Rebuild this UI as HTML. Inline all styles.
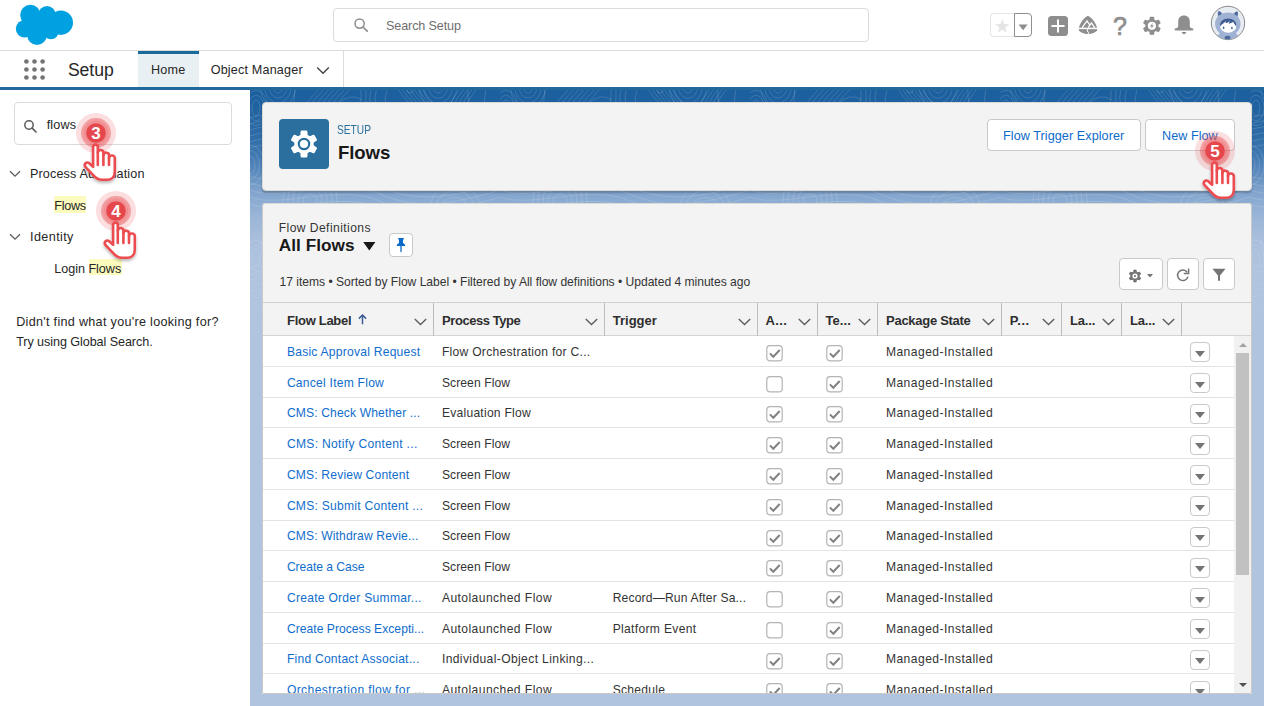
<!DOCTYPE html>
<html lang="en">
<head>
<meta charset="utf-8">
<title>Flows | Salesforce</title>
<style>
*{box-sizing:border-box;margin:0;padding:0}
html,body{width:1264px;height:706px;overflow:hidden;background:#fff}
body{font-family:"Liberation Sans",sans-serif;font-size:13px;color:#181818;position:relative}
.abs{position:absolute}
.t{position:absolute;white-space:nowrap;line-height:1}
/* header */
#hdr{left:0;top:0;width:1264px;height:51px;background:#fff;border-bottom:1px solid #dddbda}
#gsearch{left:333px;top:8px;width:536px;height:34px;border:1px solid #dddbda;border-radius:4px;background:#fff}
/* nav */
#nav{left:0;top:51px;width:1264px;height:39px;background:#fff;border-bottom:3px solid #22699b}
#hometab{left:138px;top:51px;width:61px;height:36px;background:#e9f0f4;border-top:3px solid #1b6a9c}
/* sidebar */
#side{left:0;top:90px;width:250px;height:616px;background:#fff}
#qf{left:14px;top:102px;width:218px;height:43px;border:1px solid #dddbda;border-radius:4px;background:#fff}
.hl{background:#fbfbbd}
/* content */
#content{left:250px;top:90px;width:1014px;height:616px;background:linear-gradient(180deg,#1b5f9e 0px,#1e61a0 12px,#2464a1 25px,#2f6da8 47px,#4179b1 65px,#5a89bd 81px,#6b95c4 90px,#7fa2cc 100px,#8dadd2 113px,#9db7d8 130px,#a8bedc 148px,#adc2de 166px,#b0c4df 200px,#b0c4df 100%)}
.card{background:#f3f3f3;border-radius:4px;box-shadow:0 2px 2px rgba(0,0,0,.22)}
#lvb{left:262px;top:203px;width:990px;height:491px;border:1px solid #cbc9c6;border-top-color:#dcdad7;border-radius:4px 4px 2px 2px}
#ph{left:262px;top:102px;width:990px;height:89px;border:1px solid #dcdad7}
#lv{left:262px;top:203px;width:990px;height:491px;border-radius:4px 4px 0 0;box-shadow:none}
.btn{position:absolute;height:32px;border:1px solid #c9c9c9;border-radius:4px;background:#fff;color:#0b6bcb;font-size:13px;line-height:30px;text-align:center;white-space:nowrap}
#tbl{left:263px;top:302px;width:988px;height:391px;background:#fff;overflow:hidden}
#thead{left:0;top:0;width:988px;height:34px;background:#f3f3f3;border-top:1px solid #d0d0d0;border-bottom:1px solid #d4d4d4}
#tbl i{position:absolute;display:block}
.sep{top:0;width:1px;height:33px;background:#bdbdbd}
.chv,.cbs{position:absolute}
.rl{left:0;width:971px;height:1px;background:#e3e3e3}
.cb{width:16.6px;height:16.4px;border:1px solid #b3b3b3;border-radius:3.5px;background:#fff}
.cb.on::after{content:"";position:absolute;left:5.2px;top:1.6px;width:4.9px;height:9.2px;border:solid #808080;border-width:0 2px 2px 0;transform:rotate(44deg)}
.dd{width:20px;height:20px;border:1px solid #c9c9c9;border-radius:4px;background:#fff}
.dd::after{content:"";position:absolute;left:3.5px;top:7.5px;border:5.5px solid transparent;border-top:6px solid #747474;border-bottom:0}
#sb{left:971px;top:34px;width:17px;height:357px;background:#f1f1f1}
#sb .thumb{position:absolute;left:2px;top:17px;width:13px;height:222px;background:#c1c1c1}
#sb .up{position:absolute;left:5px;top:7px;border:4px solid transparent;border-bottom:4px solid #a3a3a3;border-top:0}
#sb .down{position:absolute;left:5px;top:347px;border:4px solid transparent;border-top:4px solid #505050;border-bottom:0}
</style>
</head>
<body>
<!-- HEADER -->
<div id="hdr" class="abs"></div>
<div id="gsearch" class="abs"></div>
<!-- NAV -->
<div id="nav" class="abs"></div>
<div id="hometab" class="abs"></div>
<div class="abs" style="left:343px;top:51px;width:1px;height:36px;background:#dddbda"></div>
<!-- SIDEBAR -->
<div id="side" class="abs"></div>
<div id="qf" class="abs"></div>
<svg class="abs" style="left:14px;top:3px" width="62" height="44" viewBox="14 3 62 44"><g fill="#00a1e0">
<circle cx="30.4" cy="15" r="10.2"/><circle cx="47" cy="14.6" r="8.6"/><circle cx="60.8" cy="22.7" r="12.2"/>
<circle cx="24.6" cy="28.8" r="8.8"/><circle cx="37" cy="35" r="9.9"/><circle cx="51" cy="31.5" r="7.8"/>
<ellipse cx="42" cy="25" rx="16" ry="11"/></g></svg>
<svg class="abs" style="left:22px;top:57px" width="26" height="26" viewBox="22 57 26 26"><g fill="#747474"><circle cx="26.4" cy="61.5" r="2.3"/><circle cx="34.5" cy="61.5" r="2.3"/><circle cx="42.6" cy="61.5" r="2.3"/><circle cx="26.4" cy="69.5" r="2.3"/><circle cx="34.5" cy="69.5" r="2.3"/><circle cx="42.6" cy="69.5" r="2.3"/><circle cx="26.4" cy="77.5" r="2.3"/><circle cx="34.5" cy="77.5" r="2.3"/><circle cx="42.6" cy="77.5" r="2.3"/></g></svg>
<svg class="abs" style="left:353px;top:17px" width="16" height="16" viewBox="0 0 16 16"><circle cx="6.6" cy="6.6" r="4.6" fill="none" stroke="#8e8e8e" stroke-width="1.5"/><path d="M10 10 L14.2 14.2" stroke="#8e8e8e" stroke-width="1.7" stroke-linecap="round"/></svg>
<svg class="abs" style="left:316px;top:66px" width="14" height="9" viewBox="0 0 14 9"><path d="M1.2 1.4 L7 7.2 L12.8 1.4" fill="none" stroke="#444" stroke-width="1.4"/></svg>
<div class="abs" style="left:990px;top:13px;width:25px;height:24px;border:1px solid #e5e5e5;border-right:0;border-radius:4px 0 0 4px;background:#fff"></div>
<div class="abs" style="left:1014px;top:13px;width:18px;height:24px;border:1px solid #8e8e8e;border-radius:0 4px 4px 0;background:#fff"></div>
<svg class="abs" style="left:990px;top:13px" width="44" height="26" viewBox="990 13 44 26"><polygon points="1002.30,19.00 1004.12,24.09 1009.53,24.25 1005.25,27.56 1006.77,32.75 1002.30,29.70 997.83,32.75 999.35,27.56 995.07,24.25 1000.48,24.09" fill="#e5e5e5"/><path d="M1018.6 24.4 L1027.6 24.4 L1023.1 30.2Z" fill="#8e8e8e"/></svg>
<svg class="abs" style="left:1048px;top:16px" width="20" height="20" viewBox="0 0 20 20"><rect width="20" height="20" rx="3.5" fill="#8e8e8e"/><path d="M10 4.2V15.8M4.2 10H15.8" stroke="#fff" stroke-width="2" stroke-linecap="round"/></svg>
<svg class="abs" style="left:1078px;top:15px" width="20" height="20" viewBox="0 0 20 20">
<path d="M9.9 0.7 C12.8 2 17.6 6.8 19.3 13.2 C19.6 15 18.6 16.4 17 17.3 C13 19.7 7 19.7 3 17.3 C1.4 16.4 0.4 15 0.7 13.2 C2.4 6.8 7 2 9.9 0.7Z" fill="#8e8e8e"/>
<path d="M4.2 12.6 L9 5.9 L11.7 10 M10.2 12.6 L13.4 7.9 L16.7 12.6" stroke="#fff" stroke-width="1.3" fill="none" stroke-linejoin="miter"/>
<path d="M0.3 13.4 H19.7" stroke="#fff" stroke-width="1.5"/>
<path d="M10 13.6 L9 16 L10.7 17.3 L9.8 19.6" stroke="#fff" stroke-width="1" fill="none"/>
</svg>
<div class="t" style="left:1112px;top:11.5px;font-size:25px;font-weight:normal;-webkit-text-stroke:0.7px #8e8e8e;color:#8e8e8e;line-height:28px;width:16px;text-align:center">?</div>
<svg class="abs" style="left:1142px;top:16px" width="20" height="20" viewBox="0 0 20 20"><path d="M8.05 4.09 L8.39 1.43 L11.41 1.43 L11.75 4.09 L13.91 5.34 L16.39 4.31 L17.90 6.92 L15.77 8.55 L15.77 11.05 L17.90 12.68 L16.39 15.29 L13.91 14.26 L11.75 15.51 L11.41 18.17 L8.39 18.17 L8.05 15.51 L5.89 14.26 L3.41 15.29 L1.90 12.68 L4.03 11.05 L4.03 8.55 L1.90 6.92 L3.41 4.31 L5.89 5.34Z" fill="#8e8e8e" stroke="#8e8e8e" stroke-width="1.4" stroke-linejoin="round"/><circle cx="9.9" cy="9.8" r="4.1" fill="#fff"/><path d="M10.9 6.7 L8.0 10.4 H9.8 L8.9 13 L11.8 9.3 H10.0Z" fill="#8e8e8e"/></svg>
<svg class="abs" style="left:1174px;top:15px" width="20" height="20" viewBox="0 0 20 20"><path d="M10 0.6 C6.3 0.6 4.2 3.2 4.2 6.6 V11.2 C4.2 12.6 2.6 13.2 1 13.6 C0.4 13.8 0.4 15.4 1.2 15.4 H18.8 C19.6 15.4 19.6 13.8 19 13.6 C17.4 13.2 15.8 12.6 15.8 11.2 V6.6 C15.8 3.2 13.7 0.6 10 0.6Z" fill="#8e8e8e"/><path d="M7.8 17 H12.2 C12.2 18.4 11.2 19.2 10 19.2 C8.8 19.2 7.8 18.4 7.8 17Z" fill="#8e8e8e"/></svg>
<svg class="abs" style="left:1210px;top:5px" width="36" height="36" viewBox="0 0 36 36">
<defs><clipPath id="avc"><circle cx="18" cy="17.95" r="16.5"/></clipPath></defs>
<circle cx="18" cy="17.95" r="16.7" fill="#e8ecf3" stroke="#7d7d7d" stroke-width="0.9"/>
<g clip-path="url(#avc)">
<path d="M8.2 5.6 C10 6.6 12.4 8 13.6 9.2 L8.4 14 C7.4 11.4 7.4 8 8.2 5.6Z M27.6 5.8 C25.8 6.8 23.6 8 22.4 9.2 L27.4 14 C28.4 11.4 28.4 8.2 27.6 5.8Z" fill="#9fb2d4"/>
<ellipse cx="10" cy="9.4" rx="1.8" ry="3" transform="rotate(-18 10 9.4)" fill="#4f6a9a"/>
<ellipse cx="25.9" cy="9.6" rx="1.8" ry="3" transform="rotate(18 25.9 9.6)" fill="#4f6a9a"/>
<ellipse cx="17.8" cy="19" rx="12.7" ry="11.6" fill="#9fb2d4"/>
<path d="M7 36 C7 29 10 26 17.8 26 C25.6 26 28.8 29 28.8 36Z" fill="#9fb2d4"/>
<ellipse cx="18.2" cy="21.2" rx="8.1" ry="6.6" fill="#fff"/>
<path d="M10.1 21.4 C9.6 16.4 13.2 13.5 18.2 13.5 C23.2 13.5 26.8 16.4 26.3 21.4 C25 19.8 23.8 18.4 23.2 16.8 C22 18 20.4 18.6 18.6 18.6 C19.2 17.8 19.6 17 19.6 16 C18.2 17.6 16.6 18.2 15.4 18 C15.8 17.4 16 16.8 16 16.2 C14 18 11.6 19.4 10.1 21.4Z" fill="#3f5f92"/>
<ellipse cx="13.6" cy="22.8" rx="0.8" ry="1.2" fill="#3f5f92"/><ellipse cx="21.9" cy="23" rx="0.8" ry="1.2" fill="#3f5f92"/>
<ellipse cx="17.6" cy="32.7" rx="2.9" ry="1.9" fill="#4f6a9a"/>
</g></svg>
<svg class="abs" style="left:23px;top:118.7px" width="15" height="15" viewBox="0 0 15 15"><circle cx="6" cy="6" r="4.2" fill="none" stroke="#5c5c5c" stroke-width="1.5"/><path d="M9.2 9.2 L13 13" stroke="#5c5c5c" stroke-width="1.7" stroke-linecap="round"/></svg>
<svg class="abs" style="left:9px;top:170px" width="12" height="8" viewBox="0 0 12 8"><path d="M1 1.2 L6 6.2 L11 1.2" fill="none" stroke="#5c5c5c" stroke-width="1.3"/></svg>
<svg class="abs" style="left:9px;top:233px" width="12" height="8" viewBox="0 0 12 8"><path d="M1 1.2 L6 6.2 L11 1.2" fill="none" stroke="#5c5c5c" stroke-width="1.3"/></svg>
<!-- CONTENT -->
<div id="content" class="abs"></div>
<svg class="abs" style="left:250px;top:90px" width="1014" height="616" viewBox="0 0 1014 616">
<defs><linearGradient id="tfade" x1="0" y1="0" x2="0" y2="1"><stop offset="0" stop-color="#fff"/><stop offset="0.55" stop-color="#fff"/><stop offset="1" stop-color="#000"/></linearGradient><mask id="tmask"><rect width="1014" height="260" fill="url(#tfade)"/></mask><pattern id="topo" width="250" height="150" patternUnits="userSpaceOnUse"><g fill="none" stroke="#fff" stroke-opacity="0.2" stroke-width="0.7"><ellipse cx="28" cy="-4" rx="5.0" ry="7.0"/><ellipse cx="28" cy="-4" rx="9.2" ry="12.0"/><ellipse cx="28" cy="-4" rx="13.4" ry="17.1"/><ellipse cx="28" cy="-4" rx="17.6" ry="22.1"/><ellipse cx="188" cy="-6" rx="6.0" ry="9.0"/><ellipse cx="188" cy="-6" rx="10.4" ry="14.3"/><ellipse cx="188" cy="-6" rx="14.8" ry="19.6"/><ellipse cx="188" cy="-6" rx="19.2" ry="24.8"/><ellipse cx="6" cy="18" rx="4.0" ry="8.0"/><ellipse cx="6" cy="18" rx="8.0" ry="12.8"/><ellipse cx="6" cy="18" rx="12.0" ry="17.6"/><ellipse cx="125" cy="60" rx="8.0" ry="5.0"/><ellipse cx="125" cy="60" rx="13.0" ry="11.0"/><ellipse cx="125" cy="60" rx="18.0" ry="17.0"/><ellipse cx="125" cy="60" rx="23.0" ry="23.0"/><ellipse cx="125" cy="60" rx="28.0" ry="29.0"/><ellipse cx="60" cy="110" rx="7.0" ry="6.0"/><ellipse cx="60" cy="110" rx="12.0" ry="12.0"/><ellipse cx="60" cy="110" rx="17.0" ry="18.0"/><ellipse cx="60" cy="110" rx="22.0" ry="24.0"/><ellipse cx="60" cy="110" rx="27.0" ry="30.0"/><ellipse cx="205" cy="120" rx="9.0" ry="6.0"/><ellipse cx="205" cy="120" rx="14.5" ry="12.6"/><ellipse cx="205" cy="120" rx="20.0" ry="19.2"/><ellipse cx="205" cy="120" rx="25.5" ry="25.8"/><ellipse cx="0" cy="75" rx="5.0" ry="9.0"/><ellipse cx="0" cy="75" rx="9.5" ry="14.4"/><ellipse cx="0" cy="75" rx="14.0" ry="19.8"/><ellipse cx="250" cy="75" rx="5.0" ry="9.0"/><ellipse cx="250" cy="75" rx="9.5" ry="14.4"/><ellipse cx="250" cy="75" rx="14.0" ry="19.8"/><ellipse cx="160" cy="150" rx="8.0" ry="6.0"/><ellipse cx="160" cy="150" rx="13.0" ry="12.0"/><ellipse cx="160" cy="150" rx="18.0" ry="18.0"/><ellipse cx="160" cy="150" rx="23.0" ry="24.0"/><ellipse cx="160" cy="0" rx="3.0" ry="3.0"/><path d="M56.0 14 Q62.0 6 69.0 -1"/><path d="M61.2 14 Q67.2 6 74.2 -1"/><path d="M66.4 14 Q72.4 6 79.4 -1"/><path d="M71.6 14 Q77.6 6 84.6 -1"/><path d="M76.8 14 Q82.8 6 89.8 -1"/><path d="M82.0 14 Q88.0 6 95.0 -1"/><path d="M87.2 14 Q93.2 6 100.2 -1"/><path d="M200.0 14 Q204.0 6 210.0 -1"/><path d="M204.2 14 Q208.2 6 214.2 -1"/><path d="M208.4 14 Q212.4 6 218.4 -1"/><path d="M212.6 14 Q216.6 6 222.6 -1"/><path d="M216.8 14 Q220.8 6 226.8 -1"/><path d="M148.0 -1 Q153.0 7 160.0 14"/><path d="M152.0 -1 Q157.0 7 164.0 14"/><path d="M156.0 -1 Q161.0 7 168.0 14"/><path d="M160.0 -1 Q165.0 7 172.0 14"/><path d="M164.0 -1 Q169.0 7 176.0 14"/><path d="M168.0 -1 Q173.0 7 180.0 14"/><path d="M172.0 -1 Q177.0 7 184.0 14"/><path d="M45 -1 Q43.9 8 43.6 16"/><path d="M111 -1 Q111.9 8 109.3 16"/><path d="M116 -1 Q116.2 8 115.5 16"/><path d="M121 -1 Q118.3 8 121.0 16"/><path d="M126.5 -1 Q123.7 8 126.2 16"/><path d="M137 -1 Q134.4 8 135.4 16"/><path d="M218 -1 Q217.5 8 219.3 16"/><path d="M236 -1 Q233.7 8 234.9 16"/><path d="M88 14 Q100 2 112 10"/><path d="M0 28 C40 14 70 44 110 30 S190 16 250 28"/><path d="M0 34 C40 20 70 50 110 36 S190 22 250 34"/><path d="M0 40 C40 26 70 56 110 42 S190 28 250 40"/><path d="M0 46 C40 32 70 62 110 48 S190 34 250 46"/><path d="M0 52 C40 38 70 68 110 54 S190 40 250 52"/><path d="M0 58 C40 44 70 74 110 60 S190 46 250 58"/><path d="M0 86 C30 98 90 72 130 90 S210 98 250 86"/><path d="M0 93 C30 105 90 79 130 97 S210 105 250 93"/><path d="M0 100 C30 112 90 86 130 104 S210 112 250 100"/><path d="M0 107 C30 119 90 93 130 111 S210 119 250 107"/><path d="M0 114 C30 126 90 100 130 118 S210 126 250 114"/></g></pattern></defs>
<rect width="1014" height="260" fill="url(#topo)" mask="url(#tmask)"/></svg>
<div id="ph" class="abs card"></div>
<div class="abs" style="left:279px;top:119px;width:50px;height:50px;border-radius:4px;background:#2a6f9e"></div>
<div id="lv" class="abs card"></div>
<div id="tbl" class="abs">
 <div id="thead" class="abs">
<i class="sep" style="left:170px"></i>
<svg class="chv" style="left:150.7px;top:15.4px" viewBox="0 0 13 8" width="13" height="8"><path d="M0.8 1 L6.5 6.6 L12.2 1" fill="none" stroke="#5c5c5c" stroke-width="1.35"/></svg>
<i class="sep" style="left:341px"></i>
<svg class="chv" style="left:321.7px;top:15.4px" viewBox="0 0 13 8" width="13" height="8"><path d="M0.8 1 L6.5 6.6 L12.2 1" fill="none" stroke="#5c5c5c" stroke-width="1.35"/></svg>
<i class="sep" style="left:494px"></i>
<svg class="chv" style="left:474.7px;top:15.4px" viewBox="0 0 13 8" width="13" height="8"><path d="M0.8 1 L6.5 6.6 L12.2 1" fill="none" stroke="#5c5c5c" stroke-width="1.35"/></svg>
<i class="sep" style="left:554px"></i>
<svg class="chv" style="left:534.7px;top:15.4px" viewBox="0 0 13 8" width="13" height="8"><path d="M0.8 1 L6.5 6.6 L12.2 1" fill="none" stroke="#5c5c5c" stroke-width="1.35"/></svg>
<i class="sep" style="left:614px"></i>
<svg class="chv" style="left:594.7px;top:15.4px" viewBox="0 0 13 8" width="13" height="8"><path d="M0.8 1 L6.5 6.6 L12.2 1" fill="none" stroke="#5c5c5c" stroke-width="1.35"/></svg>
<i class="sep" style="left:738px"></i>
<svg class="chv" style="left:718.7px;top:15.4px" viewBox="0 0 13 8" width="13" height="8"><path d="M0.8 1 L6.5 6.6 L12.2 1" fill="none" stroke="#5c5c5c" stroke-width="1.35"/></svg>
<i class="sep" style="left:798px"></i>
<svg class="chv" style="left:778.7px;top:15.4px" viewBox="0 0 13 8" width="13" height="8"><path d="M0.8 1 L6.5 6.6 L12.2 1" fill="none" stroke="#5c5c5c" stroke-width="1.35"/></svg>
<i class="sep" style="left:858px"></i>
<svg class="chv" style="left:838.7px;top:15.4px" viewBox="0 0 13 8" width="13" height="8"><path d="M0.8 1 L6.5 6.6 L12.2 1" fill="none" stroke="#5c5c5c" stroke-width="1.35"/></svg>
<i class="sep" style="left:918px"></i>
<svg class="chv" style="left:898.7px;top:15.4px" viewBox="0 0 13 8" width="13" height="8"><path d="M0.8 1 L6.5 6.6 L12.2 1" fill="none" stroke="#5c5c5c" stroke-width="1.35"/></svg>
<svg class="abs" style="left:94.6px;top:11px" width="9" height="11" viewBox="0 0 9 11"><path d="M4.5 10.2 V1.4 M0.9 4.6 L4.5 1 L8.1 4.6" fill="none" stroke="#3c5a94" stroke-width="1.5"/></svg>
 </div>
<i class="rl" style="top:64px"></i>
<svg class="cbs" style="left:503px;top:42.95px" width="18" height="18" viewBox="0 0 18 18"><rect x="0.8" y="0.7" width="15.4" height="15.2" rx="3.2" fill="#fff" stroke="#b4b4b4" stroke-width="1.2"/><path d="M3.9 8.4 L7.3 11.8 L13.7 5" fill="none" stroke="#828282" stroke-width="2"/></svg>
<svg class="cbs" style="left:563px;top:42.95px" width="18" height="18" viewBox="0 0 18 18"><rect x="0.8" y="0.7" width="15.4" height="15.2" rx="3.2" fill="#fff" stroke="#b4b4b4" stroke-width="1.2"/><path d="M3.9 8.4 L7.3 11.8 L13.7 5" fill="none" stroke="#828282" stroke-width="2"/></svg>
<i class="dd" style="left:927px;top:40.25px"></i>
<i class="rl" style="top:95px"></i>
<svg class="cbs" style="left:503px;top:73.71px" width="18" height="18" viewBox="0 0 18 18"><rect x="0.8" y="0.7" width="15.4" height="15.2" rx="3.2" fill="#fff" stroke="#b4b4b4" stroke-width="1.2"/></svg>
<svg class="cbs" style="left:563px;top:73.71px" width="18" height="18" viewBox="0 0 18 18"><rect x="0.8" y="0.7" width="15.4" height="15.2" rx="3.2" fill="#fff" stroke="#b4b4b4" stroke-width="1.2"/><path d="M3.9 8.4 L7.3 11.8 L13.7 5" fill="none" stroke="#828282" stroke-width="2"/></svg>
<i class="dd" style="left:927px;top:71.01px"></i>
<i class="rl" style="top:125px"></i>
<svg class="cbs" style="left:503px;top:104.47px" width="18" height="18" viewBox="0 0 18 18"><rect x="0.8" y="0.7" width="15.4" height="15.2" rx="3.2" fill="#fff" stroke="#b4b4b4" stroke-width="1.2"/><path d="M3.9 8.4 L7.3 11.8 L13.7 5" fill="none" stroke="#828282" stroke-width="2"/></svg>
<svg class="cbs" style="left:563px;top:104.47px" width="18" height="18" viewBox="0 0 18 18"><rect x="0.8" y="0.7" width="15.4" height="15.2" rx="3.2" fill="#fff" stroke="#b4b4b4" stroke-width="1.2"/><path d="M3.9 8.4 L7.3 11.8 L13.7 5" fill="none" stroke="#828282" stroke-width="2"/></svg>
<i class="dd" style="left:927px;top:101.77px"></i>
<i class="rl" style="top:156px"></i>
<svg class="cbs" style="left:503px;top:135.23px" width="18" height="18" viewBox="0 0 18 18"><rect x="0.8" y="0.7" width="15.4" height="15.2" rx="3.2" fill="#fff" stroke="#b4b4b4" stroke-width="1.2"/><path d="M3.9 8.4 L7.3 11.8 L13.7 5" fill="none" stroke="#828282" stroke-width="2"/></svg>
<svg class="cbs" style="left:563px;top:135.23px" width="18" height="18" viewBox="0 0 18 18"><rect x="0.8" y="0.7" width="15.4" height="15.2" rx="3.2" fill="#fff" stroke="#b4b4b4" stroke-width="1.2"/><path d="M3.9 8.4 L7.3 11.8 L13.7 5" fill="none" stroke="#828282" stroke-width="2"/></svg>
<i class="dd" style="left:927px;top:132.53px"></i>
<i class="rl" style="top:187px"></i>
<svg class="cbs" style="left:503px;top:165.99px" width="18" height="18" viewBox="0 0 18 18"><rect x="0.8" y="0.7" width="15.4" height="15.2" rx="3.2" fill="#fff" stroke="#b4b4b4" stroke-width="1.2"/><path d="M3.9 8.4 L7.3 11.8 L13.7 5" fill="none" stroke="#828282" stroke-width="2"/></svg>
<svg class="cbs" style="left:563px;top:165.99px" width="18" height="18" viewBox="0 0 18 18"><rect x="0.8" y="0.7" width="15.4" height="15.2" rx="3.2" fill="#fff" stroke="#b4b4b4" stroke-width="1.2"/><path d="M3.9 8.4 L7.3 11.8 L13.7 5" fill="none" stroke="#828282" stroke-width="2"/></svg>
<i class="dd" style="left:927px;top:163.29px"></i>
<i class="rl" style="top:218px"></i>
<svg class="cbs" style="left:503px;top:196.75px" width="18" height="18" viewBox="0 0 18 18"><rect x="0.8" y="0.7" width="15.4" height="15.2" rx="3.2" fill="#fff" stroke="#b4b4b4" stroke-width="1.2"/><path d="M3.9 8.4 L7.3 11.8 L13.7 5" fill="none" stroke="#828282" stroke-width="2"/></svg>
<svg class="cbs" style="left:563px;top:196.75px" width="18" height="18" viewBox="0 0 18 18"><rect x="0.8" y="0.7" width="15.4" height="15.2" rx="3.2" fill="#fff" stroke="#b4b4b4" stroke-width="1.2"/><path d="M3.9 8.4 L7.3 11.8 L13.7 5" fill="none" stroke="#828282" stroke-width="2"/></svg>
<i class="dd" style="left:927px;top:194.05px"></i>
<i class="rl" style="top:248px"></i>
<svg class="cbs" style="left:503px;top:227.51px" width="18" height="18" viewBox="0 0 18 18"><rect x="0.8" y="0.7" width="15.4" height="15.2" rx="3.2" fill="#fff" stroke="#b4b4b4" stroke-width="1.2"/><path d="M3.9 8.4 L7.3 11.8 L13.7 5" fill="none" stroke="#828282" stroke-width="2"/></svg>
<svg class="cbs" style="left:563px;top:227.51px" width="18" height="18" viewBox="0 0 18 18"><rect x="0.8" y="0.7" width="15.4" height="15.2" rx="3.2" fill="#fff" stroke="#b4b4b4" stroke-width="1.2"/><path d="M3.9 8.4 L7.3 11.8 L13.7 5" fill="none" stroke="#828282" stroke-width="2"/></svg>
<i class="dd" style="left:927px;top:224.81px"></i>
<i class="rl" style="top:279px"></i>
<svg class="cbs" style="left:503px;top:258.27px" width="18" height="18" viewBox="0 0 18 18"><rect x="0.8" y="0.7" width="15.4" height="15.2" rx="3.2" fill="#fff" stroke="#b4b4b4" stroke-width="1.2"/><path d="M3.9 8.4 L7.3 11.8 L13.7 5" fill="none" stroke="#828282" stroke-width="2"/></svg>
<svg class="cbs" style="left:563px;top:258.27px" width="18" height="18" viewBox="0 0 18 18"><rect x="0.8" y="0.7" width="15.4" height="15.2" rx="3.2" fill="#fff" stroke="#b4b4b4" stroke-width="1.2"/><path d="M3.9 8.4 L7.3 11.8 L13.7 5" fill="none" stroke="#828282" stroke-width="2"/></svg>
<i class="dd" style="left:927px;top:255.57px"></i>
<i class="rl" style="top:310px"></i>
<svg class="cbs" style="left:503px;top:289.03px" width="18" height="18" viewBox="0 0 18 18"><rect x="0.8" y="0.7" width="15.4" height="15.2" rx="3.2" fill="#fff" stroke="#b4b4b4" stroke-width="1.2"/></svg>
<svg class="cbs" style="left:563px;top:289.03px" width="18" height="18" viewBox="0 0 18 18"><rect x="0.8" y="0.7" width="15.4" height="15.2" rx="3.2" fill="#fff" stroke="#b4b4b4" stroke-width="1.2"/><path d="M3.9 8.4 L7.3 11.8 L13.7 5" fill="none" stroke="#828282" stroke-width="2"/></svg>
<i class="dd" style="left:927px;top:286.33px"></i>
<i class="rl" style="top:341px"></i>
<svg class="cbs" style="left:503px;top:319.79px" width="18" height="18" viewBox="0 0 18 18"><rect x="0.8" y="0.7" width="15.4" height="15.2" rx="3.2" fill="#fff" stroke="#b4b4b4" stroke-width="1.2"/></svg>
<svg class="cbs" style="left:563px;top:319.79px" width="18" height="18" viewBox="0 0 18 18"><rect x="0.8" y="0.7" width="15.4" height="15.2" rx="3.2" fill="#fff" stroke="#b4b4b4" stroke-width="1.2"/><path d="M3.9 8.4 L7.3 11.8 L13.7 5" fill="none" stroke="#828282" stroke-width="2"/></svg>
<i class="dd" style="left:927px;top:317.09px"></i>
<i class="rl" style="top:371px"></i>
<svg class="cbs" style="left:503px;top:350.55px" width="18" height="18" viewBox="0 0 18 18"><rect x="0.8" y="0.7" width="15.4" height="15.2" rx="3.2" fill="#fff" stroke="#b4b4b4" stroke-width="1.2"/><path d="M3.9 8.4 L7.3 11.8 L13.7 5" fill="none" stroke="#828282" stroke-width="2"/></svg>
<svg class="cbs" style="left:563px;top:350.55px" width="18" height="18" viewBox="0 0 18 18"><rect x="0.8" y="0.7" width="15.4" height="15.2" rx="3.2" fill="#fff" stroke="#b4b4b4" stroke-width="1.2"/><path d="M3.9 8.4 L7.3 11.8 L13.7 5" fill="none" stroke="#828282" stroke-width="2"/></svg>
<i class="dd" style="left:927px;top:347.85px"></i>
<i class="rl" style="top:402px"></i>
<svg class="cbs" style="left:503px;top:381.31px" width="18" height="18" viewBox="0 0 18 18"><rect x="0.8" y="0.7" width="15.4" height="15.2" rx="3.2" fill="#fff" stroke="#b4b4b4" stroke-width="1.2"/><path d="M3.9 8.4 L7.3 11.8 L13.7 5" fill="none" stroke="#828282" stroke-width="2"/></svg>
<svg class="cbs" style="left:563px;top:381.31px" width="18" height="18" viewBox="0 0 18 18"><rect x="0.8" y="0.7" width="15.4" height="15.2" rx="3.2" fill="#fff" stroke="#b4b4b4" stroke-width="1.2"/><path d="M3.9 8.4 L7.3 11.8 L13.7 5" fill="none" stroke="#828282" stroke-width="2"/></svg>
<i class="dd" style="left:927px;top:378.61px"></i>
<div class="t" style="left:23.9px;top:44px;font-size:12.1px;letter-spacing:0.232px;color:#106dcc">Basic Approval Request</div>
<div class="t" style="left:178.9px;top:44px;font-size:12.1px;letter-spacing:0.273px;color:#333333">Flow Orchestration for C...</div>
<div class="t" style="left:622.9px;top:44px;font-size:12.1px;letter-spacing:0.452px;color:#333333">Managed-Installed</div>
<div class="t" style="left:23.9px;top:75px;font-size:12.1px;letter-spacing:0.236px;color:#106dcc">Cancel Item Flow</div>
<div class="t" style="left:178.9px;top:75px;font-size:12.1px;letter-spacing:0.089px;color:#333333">Screen Flow</div>
<div class="t" style="left:622.9px;top:75px;font-size:12.1px;letter-spacing:0.452px;color:#333333">Managed-Installed</div>
<div class="t" style="left:23.9px;top:105px;font-size:12.1px;letter-spacing:0.141px;color:#106dcc">CMS: Check Whether ...</div>
<div class="t" style="left:178.9px;top:105px;font-size:12.1px;letter-spacing:0.248px;color:#333333">Evaluation Flow</div>
<div class="t" style="left:622.9px;top:105px;font-size:12.1px;letter-spacing:0.452px;color:#333333">Managed-Installed</div>
<div class="t" style="left:23.9px;top:136px;font-size:12.1px;letter-spacing:0.306px;color:#106dcc">CMS: Notify Content ...</div>
<div class="t" style="left:178.9px;top:136px;font-size:12.1px;letter-spacing:0.089px;color:#333333">Screen Flow</div>
<div class="t" style="left:622.9px;top:136px;font-size:12.1px;letter-spacing:0.452px;color:#333333">Managed-Installed</div>
<div class="t" style="left:23.9px;top:167px;font-size:12.1px;letter-spacing:0.175px;color:#106dcc">CMS: Review Content</div>
<div class="t" style="left:178.9px;top:167px;font-size:12.1px;letter-spacing:0.089px;color:#333333">Screen Flow</div>
<div class="t" style="left:622.9px;top:167px;font-size:12.1px;letter-spacing:0.452px;color:#333333">Managed-Installed</div>
<div class="t" style="left:23.9px;top:198px;font-size:12.1px;letter-spacing:0.248px;color:#106dcc">CMS: Submit Content ...</div>
<div class="t" style="left:178.9px;top:198px;font-size:12.1px;letter-spacing:0.089px;color:#333333">Screen Flow</div>
<div class="t" style="left:622.9px;top:198px;font-size:12.1px;letter-spacing:0.452px;color:#333333">Managed-Installed</div>
<div class="t" style="left:23.9px;top:228px;font-size:12.1px;letter-spacing:0.147px;color:#106dcc">CMS: Withdraw Revie...</div>
<div class="t" style="left:178.9px;top:228px;font-size:12.1px;letter-spacing:0.089px;color:#333333">Screen Flow</div>
<div class="t" style="left:622.9px;top:228px;font-size:12.1px;letter-spacing:0.452px;color:#333333">Managed-Installed</div>
<div class="t" style="left:23.9px;top:259px;font-size:12.1px;letter-spacing:-0.030px;color:#106dcc">Create a Case</div>
<div class="t" style="left:178.9px;top:259px;font-size:12.1px;letter-spacing:0.089px;color:#333333">Screen Flow</div>
<div class="t" style="left:622.9px;top:259px;font-size:12.1px;letter-spacing:0.452px;color:#333333">Managed-Installed</div>
<div class="t" style="left:23.9px;top:290px;font-size:12.1px;letter-spacing:0.262px;color:#106dcc">Create Order Summar...</div>
<div class="t" style="left:178.9px;top:290px;font-size:12.1px;letter-spacing:0.431px;color:#333333">Autolaunched Flow</div>
<div class="t" style="left:349.7px;top:290px;font-size:12.1px;letter-spacing:0.171px;color:#333333">Record—Run After Sa...</div>
<div class="t" style="left:622.9px;top:290px;font-size:12.1px;letter-spacing:0.452px;color:#333333">Managed-Installed</div>
<div class="t" style="left:23.9px;top:321px;font-size:12.1px;letter-spacing:0.034px;color:#106dcc">Create Process Excepti...</div>
<div class="t" style="left:178.9px;top:321px;font-size:12.1px;letter-spacing:0.431px;color:#333333">Autolaunched Flow</div>
<div class="t" style="left:349.7px;top:321px;font-size:12.1px;letter-spacing:0.313px;color:#333333">Platform Event</div>
<div class="t" style="left:622.9px;top:321px;font-size:12.1px;letter-spacing:0.452px;color:#333333">Managed-Installed</div>
<div class="t" style="left:23.9px;top:351px;font-size:12.1px;letter-spacing:0.231px;color:#106dcc">Find Contact Associat...</div>
<div class="t" style="left:178.9px;top:351px;font-size:12.1px;letter-spacing:0.377px;color:#333333">Individual-Object Linking...</div>
<div class="t" style="left:622.9px;top:351px;font-size:12.1px;letter-spacing:0.452px;color:#333333">Managed-Installed</div>
<div class="t" style="left:23.9px;top:382px;font-size:12.1px;letter-spacing:0.386px;color:#106dcc">Orchestration flow for ...</div>
<div class="t" style="left:178.9px;top:382px;font-size:12.1px;letter-spacing:0.431px;color:#333333">Autolaunched Flow</div>
<div class="t" style="left:349.7px;top:382px;font-size:12.1px;letter-spacing:0.258px;color:#333333">Schedule</div>
<div class="t" style="left:622.9px;top:382px;font-size:12.1px;letter-spacing:0.452px;color:#333333">Managed-Installed</div>
<div class="t" style="left:24.1px;top:12px;font-size:13px;letter-spacing:-0.307px;color:#2e2e2e;font-weight:bold">Flow Label</div>
<div class="t" style="left:179.1px;top:12px;font-size:13px;letter-spacing:-0.441px;color:#2e2e2e;font-weight:bold">Process Type</div>
<div class="t" style="left:349.7px;top:12px;font-size:13px;letter-spacing:0.017px;color:#2e2e2e;font-weight:bold">Trigger</div>
<div class="t" style="left:502.6px;top:12px;font-size:13px;letter-spacing:0.341px;color:#2e2e2e;font-weight:bold">A...</div>
<div class="t" style="left:562.4px;top:12px;font-size:13px;letter-spacing:0.111px;color:#2e2e2e;font-weight:bold">Te...</div>
<div class="t" style="left:623.1px;top:12px;font-size:13px;letter-spacing:-0.290px;color:#2e2e2e;font-weight:bold">Package State</div>
<div class="t" style="left:746.7px;top:12px;font-size:13px;letter-spacing:0.564px;color:#2e2e2e;font-weight:bold">P...</div>
<div class="t" style="left:806.9px;top:12px;font-size:13px;letter-spacing:-0.123px;color:#2e2e2e;font-weight:bold">La...</div>
<div class="t" style="left:866.9px;top:12px;font-size:13px;letter-spacing:-0.123px;color:#2e2e2e;font-weight:bold">La...</div>
 <div id="sb" class="abs"><i class="up"></i><i class="thumb"></i><i class="down"></i></div>
</div>
<div id="lvb" class="abs"></div>
<svg class="abs" style="left:279px;top:119px" width="50" height="50" viewBox="0 0 50 50"><path d="M22.49 16.67 L22.79 12.70 L27.21 12.70 L27.51 16.67 L30.96 18.66 L34.55 16.93 L36.76 20.77 L33.47 23.01 L33.47 26.99 L36.76 29.23 L34.55 33.07 L30.96 31.34 L27.51 33.33 L27.21 37.30 L22.79 37.30 L22.49 33.33 L19.04 31.34 L15.45 33.07 L13.24 29.23 L16.53 26.99 L16.53 23.01 L13.24 20.77 L15.45 16.93 L19.04 18.66Z" fill="#fff" stroke="#fff" stroke-width="2.4" stroke-linejoin="round"/><circle cx="25" cy="25" r="5.2" fill="none" stroke="#2a709d" stroke-width="2.2"/></svg>
<svg class="abs" style="left:363px;top:242px" width="13" height="9" viewBox="0 0 13 9"><path d="M0.2 0 H12.4 L6.3 8.4Z" fill="#181818"/></svg>
<div class="abs" style="left:389px;top:233px;width:24px;height:24px;border:1px solid #c9c9c9;border-radius:4px;background:#fff"></div>
<svg class="abs" style="left:395px;top:237px" width="12" height="16" viewBox="0 0 12 16"><path d="M3.2 1 H8.8 V2.4 H8 V6 C9.4 6.6 10.2 7.6 10.2 9 H1.8 C1.8 7.6 2.6 6.6 4 6 V2.4 H3.2Z" fill="#0b6bcb"/><path d="M6 9 V14.6" stroke="#0b6bcb" stroke-width="1.3" stroke-linecap="round"/></svg>
<div class="abs" style="left:1119px;top:258px;width:44px;height:32px;border:1px solid #c9c9c9;border-radius:4px;background:#fff"></div>
<div class="abs" style="left:1167px;top:258px;width:32px;height:32px;border:1px solid #c9c9c9;border-radius:4px;background:#fff"></div>
<div class="abs" style="left:1203px;top:258px;width:32px;height:32px;border:1px solid #c9c9c9;border-radius:4px;background:#fff"></div>
<svg class="abs" style="left:1128px;top:269px" width="14" height="14" viewBox="0 0 14 14"><path d="M5.71 2.90 L5.88 1.11 L8.12 1.11 L8.29 2.90 L9.91 3.83 L11.54 3.08 L12.67 5.03 L11.20 6.06 L11.20 7.94 L12.67 8.97 L11.54 10.92 L9.91 10.17 L8.29 11.10 L8.12 12.89 L5.88 12.89 L5.71 11.10 L4.09 10.17 L2.46 10.92 L1.33 8.97 L2.80 7.94 L2.80 6.06 L1.33 5.03 L2.46 3.08 L4.09 3.83Z" fill="#747474" stroke="#747474" stroke-width="1" stroke-linejoin="round"/><circle cx="7" cy="7" r="2.6" fill="#fff"/><circle cx="7" cy="7" r="1.1" fill="#747474"/></svg>
<svg class="abs" style="left:1147px;top:274px" width="6" height="4" viewBox="0 0 6 4"><path d="M0 0 H6 L3 3.6Z" fill="#747474"/></svg>
<svg class="abs" style="left:1175px;top:267px" width="16" height="16" viewBox="0 0 16 16"><path d="M12.2 5.2 A5.3 5.3 0 1 0 13 9.6" fill="none" stroke="#747474" stroke-width="1.5"/><path d="M13.6 1.6 V6.4 H8.8" fill="none" stroke="#747474" stroke-width="1.5"/></svg>
<svg class="abs" style="left:1212px;top:268px" width="14" height="14" viewBox="0 0 14 14"><path d="M0.4 0.8 H13.6 L8 7.4 V12.8 H6 V7.4Z" fill="#747474"/></svg>
<div class="abs hl" style="left:54px;top:196.4px;width:32.2px;height:16.3px"></div>
<div class="abs hl" style="left:89.2px;top:258.9px;width:32.9px;height:16.4px"></div>
<div class="btn" style="left:987px;top:119px;width:154px"></div>
<div class="btn" style="left:1145px;top:119px;width:90px"></div>
<div class="t" style="left:1003.0px;top:130px;font-size:12.6px;letter-spacing:0.077px;color:#0b6bcb">Flow Trigger Explorer</div>
<div class="t" style="left:1162.0px;top:130px;font-size:12.6px;letter-spacing:0.050px;color:#0b6bcb">New Flow</div>
<div class="t" style="left:386.0px;top:20px;font-size:12.6px;letter-spacing:-0.119px;color:#6f6f6f">Search Setup</div>
<div class="t" style="left:67.9px;top:62px;font-size:17.6px;letter-spacing:-0.037px;color:#262626">Setup</div>
<div class="t" style="left:150.9px;top:64px;font-size:12.6px;letter-spacing:0.252px;color:#262626">Home</div>
<div class="t" style="left:210.7px;top:64px;font-size:12.6px;letter-spacing:0.178px;color:#262626">Object Manager</div>
<div class="t" style="left:46.7px;top:119px;font-size:12.6px;letter-spacing:0.159px;color:#262626">flows</div>
<div class="t" style="left:29.9px;top:168px;font-size:12.6px;letter-spacing:0.149px;color:#262626">Process Automation</div>
<div class="t" style="left:54.3px;top:200px;font-size:12.6px;letter-spacing:-0.278px;color:#262626">Flows</div>
<div class="t" style="left:30.1px;top:231px;font-size:12.6px;letter-spacing:0.386px;color:#262626">Identity</div>
<div class="t" style="left:54.2px;top:263px;font-size:12.6px;letter-spacing:-0.018px;color:#262626">Login Flows</div>
<div class="t" style="left:16.2px;top:316px;font-size:12.6px;letter-spacing:0.302px;color:#262626">Didn't find what you're looking for?</div>
<div class="t" style="left:16.2px;top:336px;font-size:12.6px;letter-spacing:-0.073px;color:#262626">Try using Global Search.</div>
<div class="t" style="left:336.7px;top:124px;font-size:12.0px;color:#2a709d;transform:scaleX(0.8497);transform-origin:0 0">SETUP</div>
<div class="t" style="left:338.1px;top:144px;font-size:18.6px;letter-spacing:-0.138px;color:#181818;font-weight:bold">Flows</div>
<div class="t" style="left:278.8px;top:222px;font-size:12.1px;letter-spacing:0.421px;color:#333333">Flow Definitions</div>
<div class="t" style="left:278.8px;top:237px;font-size:17.2px;letter-spacing:0.027px;color:#181818;font-weight:bold">All Flows</div>
<div class="t" style="left:279.5px;top:276px;font-size:12.1px;letter-spacing:-0.021px;color:#333333">17 items • Sorted by Flow Label • Filtered by All flow definitions • Updated 4 minutes ago</div>
<svg class="abs" style="left:74.1px;top:111.2px" width="50" height="76" viewBox="0 0 50 76">
<defs><filter id="hs3" x="-30%" y="-30%" width="160%" height="160%"><feDropShadow dx="0" dy="2" stdDeviation="1.6" flood-color="#000" flood-opacity="0.28"/></filter></defs>
<circle cx="22" cy="22" r="20" fill="#e8474c" fill-opacity="0.18"/>
<circle cx="22" cy="22" r="15" fill="#e8474c" fill-opacity="0.42"/><circle cx="22" cy="22" r="12.4" fill="#e8474c" fill-opacity="0.18"/>
<circle cx="22" cy="22" r="9.8" fill="#e5474d"/>
<text x="22" y="28" text-anchor="middle" font-family="Liberation Sans, sans-serif" font-weight="bold" font-size="17" fill="#fff">3</text>
<g transform="translate(6,28.4)" filter="url(#hs3)">
<path d="M13.1 26 V7.6 A2.35 2.35 0 0 1 17.8 7.6 V13.2 A2.8 2.8 0 0 1 23.4 13.6 V15.8 A2.8 2.8 0 0 1 29 16.4 V18.6 A2.9 2.9 0 0 1 34.8 19.4 V32 C34.8 37.5 31.5 40.4 27 40.4 H22 C18 40.4 15.5 38.5 12.5 35 L5.6 27.8 C3.4 25 6.2 21.8 9.2 23.8 L13.1 27.4Z" fill="#fff" stroke="#ec4b50" stroke-width="2.6" stroke-linejoin="round"/>
<path d="M17.8 13 V25.6 M23.4 15.4 V25.6 M29 18.4 V25.6" stroke="#ec4b50" stroke-width="2.6" stroke-linecap="round" fill="none"/>
</g></svg><svg class="abs" style="left:93.9px;top:189.0px" width="50" height="76" viewBox="0 0 50 76">
<defs><filter id="hs4" x="-30%" y="-30%" width="160%" height="160%"><feDropShadow dx="0" dy="2" stdDeviation="1.6" flood-color="#000" flood-opacity="0.28"/></filter></defs>
<circle cx="22" cy="22" r="20" fill="#e8474c" fill-opacity="0.18"/>
<circle cx="22" cy="22" r="15" fill="#e8474c" fill-opacity="0.42"/><circle cx="22" cy="22" r="12.4" fill="#e8474c" fill-opacity="0.18"/>
<circle cx="22" cy="22" r="9.8" fill="#e5474d"/>
<text x="22" y="28" text-anchor="middle" font-family="Liberation Sans, sans-serif" font-weight="bold" font-size="17" fill="#fff">4</text>
<g transform="translate(6,28.4)" filter="url(#hs4)">
<path d="M13.1 26 V7.6 A2.35 2.35 0 0 1 17.8 7.6 V13.2 A2.8 2.8 0 0 1 23.4 13.6 V15.8 A2.8 2.8 0 0 1 29 16.4 V18.6 A2.9 2.9 0 0 1 34.8 19.4 V32 C34.8 37.5 31.5 40.4 27 40.4 H22 C18 40.4 15.5 38.5 12.5 35 L5.6 27.8 C3.4 25 6.2 21.8 9.2 23.8 L13.1 27.4Z" fill="#fff" stroke="#ec4b50" stroke-width="2.6" stroke-linejoin="round"/>
<path d="M17.8 13 V25.6 M23.4 15.4 V25.6 M29 18.4 V25.6" stroke="#ec4b50" stroke-width="2.6" stroke-linecap="round" fill="none"/>
</g></svg><svg class="abs" style="left:1192.8px;top:128.8px" width="50" height="76" viewBox="0 0 50 76">
<defs><filter id="hs5" x="-30%" y="-30%" width="160%" height="160%"><feDropShadow dx="0" dy="2" stdDeviation="1.6" flood-color="#000" flood-opacity="0.28"/></filter></defs>
<circle cx="22" cy="22" r="20" fill="#e8474c" fill-opacity="0.18"/>
<circle cx="22" cy="22" r="15" fill="#e8474c" fill-opacity="0.42"/><circle cx="22" cy="22" r="12.4" fill="#e8474c" fill-opacity="0.18"/>
<circle cx="22" cy="22" r="9.8" fill="#e5474d"/>
<text x="22" y="28" text-anchor="middle" font-family="Liberation Sans, sans-serif" font-weight="bold" font-size="17" fill="#fff">5</text>
<g transform="translate(6,28.4)" filter="url(#hs5)">
<path d="M13.1 26 V7.6 A2.35 2.35 0 0 1 17.8 7.6 V13.2 A2.8 2.8 0 0 1 23.4 13.6 V15.8 A2.8 2.8 0 0 1 29 16.4 V18.6 A2.9 2.9 0 0 1 34.8 19.4 V32 C34.8 37.5 31.5 40.4 27 40.4 H22 C18 40.4 15.5 38.5 12.5 35 L5.6 27.8 C3.4 25 6.2 21.8 9.2 23.8 L13.1 27.4Z" fill="#fff" stroke="#ec4b50" stroke-width="2.6" stroke-linejoin="round"/>
<path d="M17.8 13 V25.6 M23.4 15.4 V25.6 M29 18.4 V25.6" stroke="#ec4b50" stroke-width="2.6" stroke-linecap="round" fill="none"/>
</g></svg>
</body>
</html>
